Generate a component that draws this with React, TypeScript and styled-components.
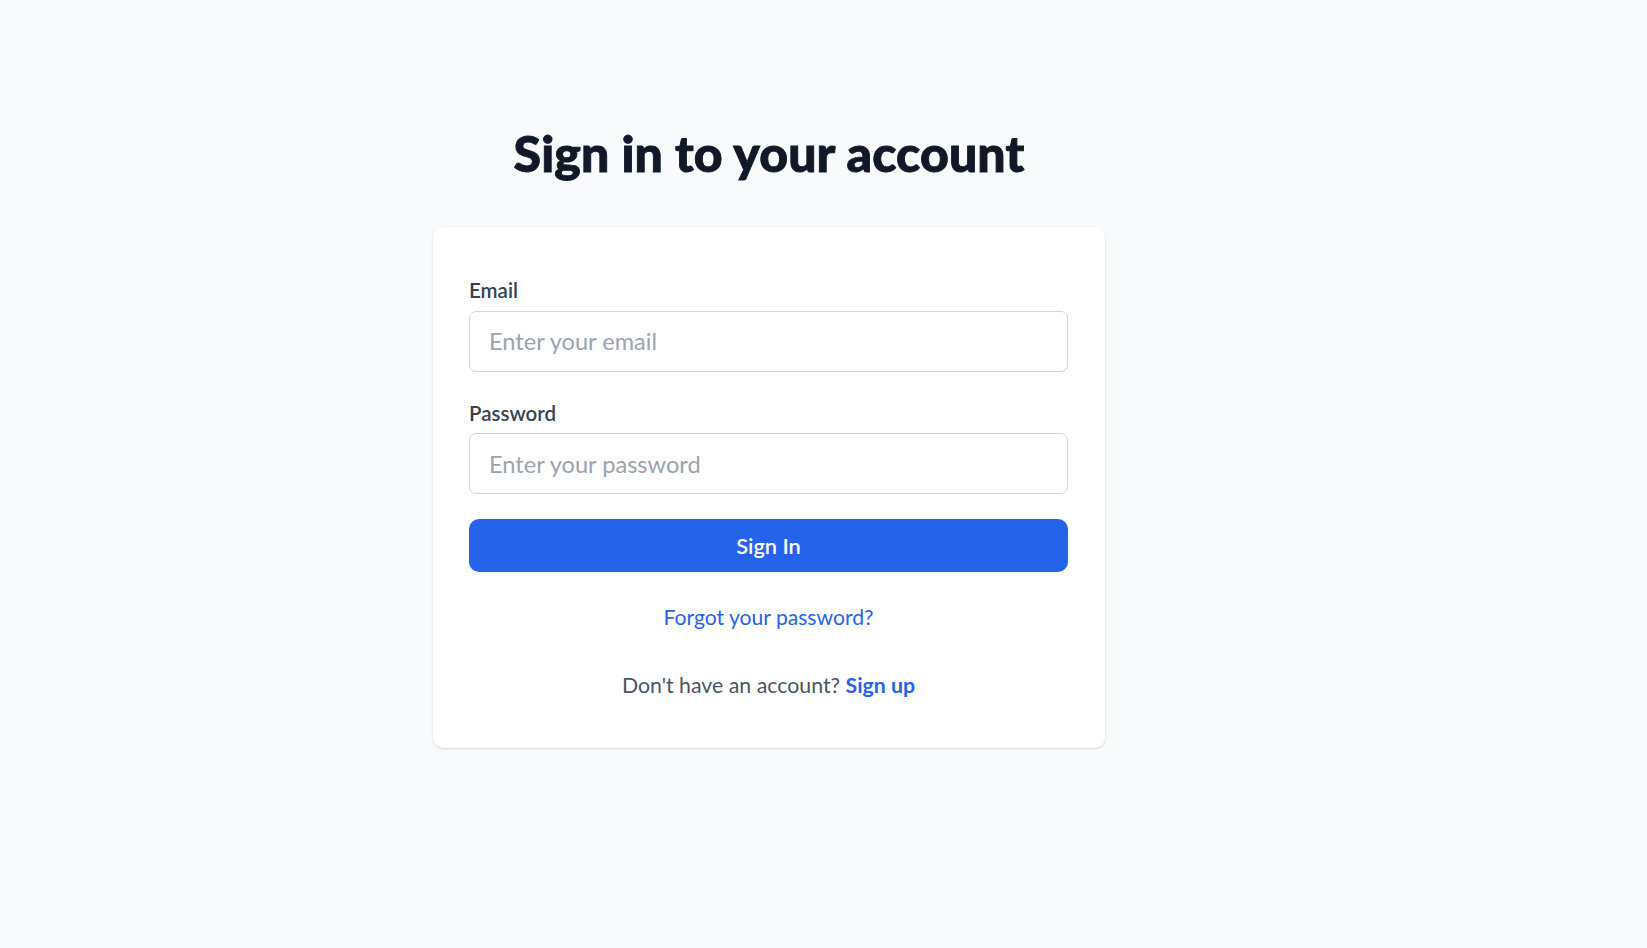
import React from "react";
import styled, { createGlobalStyle } from "styled-components";

const GlobalStyle = createGlobalStyle`
  * {
    box-sizing: border-box;
  }

  html, body {
    margin: 0;
    padding: 0;
    background-color: #f9fafb;
    font-family: "Lato", "Noto Sans", sans-serif;
    -webkit-font-smoothing: antialiased;
  }
`;

const SignIn: React.FC = () => {
  return (
    <Page>
      <GlobalStyle />
      <Title>Sign in to your account</Title>
      <Card>
        <Form onSubmit={(e) => e.preventDefault()}>
          <Field>
            <Label htmlFor="email">Email</Label>
            <Input id="email" type="email" placeholder="Enter your email" />
          </Field>
          <Field>
            <Label htmlFor="password">Password</Label>
            <Input id="password" type="password" placeholder="Enter your password" />
          </Field>
          <SubmitButton type="submit">Sign In</SubmitButton>
        </Form>
        <ForgotLink href="#">Forgot your password?</ForgotLink>
        <Footer>
          Don't have an account? <FooterLink href="#">Sign up</FooterLink>
        </Footer>
      </Card>
    </Page>
  );
};

export default SignIn;

// Styled components
const Page = styled.main`
  width: 1538px;
  min-height: 948px;
  display: flex;
  flex-direction: column;
  align-items: center;
  padding-top: 123px;
`;

const Title = styled.h1`
  margin: 0 0 44px;
  font-size: 50px;
  line-height: 1.2;
  font-weight: 900;
  color: #111827;
  text-align: center;
  -webkit-text-stroke: 0.9px #111827;
  letter-spacing: 0.1px;
`;

const Card = styled.div`
  width: 672px;
  display: flex;
  flex-direction: column;
  align-items: center;
  padding: 51px 37px 50px 36px;
  background-color: #fff;
  border-radius: 10px;
  box-shadow: 0 1px 3px rgba(0, 0, 0, 0.1), 0 1px 2px rgba(0, 0, 0, 0.06);
`;

const Form = styled.form`
  width: 100%;
  display: flex;
  flex-direction: column;
`;

const Field = styled.div`
  display: flex;
  flex-direction: column;
  gap: 8px;
  margin-bottom: 29px;

  & + & {
    margin-bottom: 25px;
  }
`;

const Label = styled.label`
  font-size: 20.5px;
  line-height: 1.2;
  font-weight: 600;
  color: #374151;
`;

const Input = styled.input`
  width: 100%;
  height: 61px;
  padding: 0 19px;
  border: 1px solid #d1d5db;
  border-radius: 7px;
  background: #fff;
  font-family: inherit;
  font-size: 23.6px;
  line-height: 1.2;
  color: #111827;
  outline: none;

  &::placeholder {
    color: #9ca3af;
  }

  &:focus {
    border-color: #2563eb;
  }
`;

const SubmitButton = styled.button`
  width: 100%;
  height: 53px;
  border: none;
  border-radius: 10px;
  background-color: #2563eb;
  color: #fff;
  font-family: inherit;
  font-size: 21.8px;
  font-weight: 600;
  cursor: pointer;

  &:hover {
    background-color: #1d4ed8;
  }
`;

const ForgotLink = styled.a`
  margin-top: 32px;
  font-size: 21.1px;
  line-height: 1.2;
  color: #2563eb;
  text-decoration: none;
`;

const Footer = styled.p`
  margin: 43px 0 0;
  font-size: 21.3px;
  line-height: 1.2;
  color: #4b5563;
`;

const FooterLink = styled.a`
  font-weight: 700;
  color: #2563eb;
  text-decoration: none;
`;
